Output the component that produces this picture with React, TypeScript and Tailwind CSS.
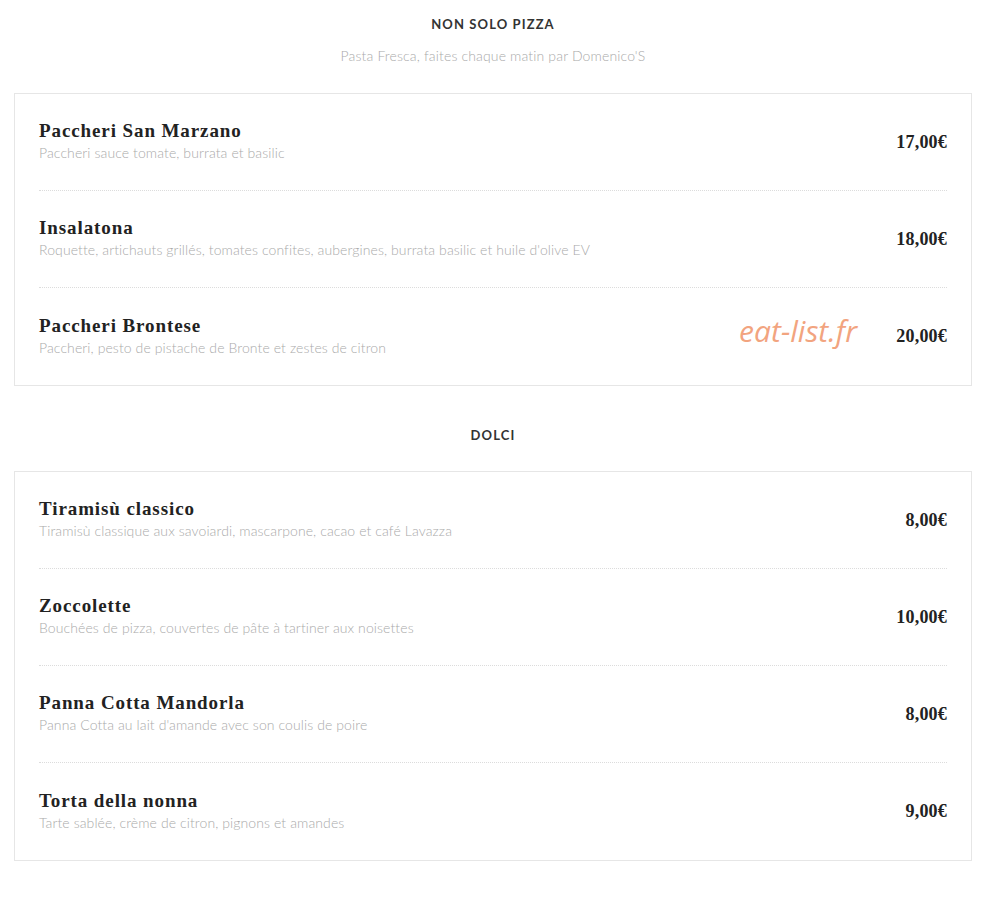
import React from "react";

type Dish = { name: string; desc: string; price: string };

const pasta: Dish[] = [
  { name: "Paccheri San Marzano", desc: "Paccheri sauce tomate, burrata et basilic", price: "17,00€" },
  {
    name: "Insalatona",
    desc: "Roquette, artichauts grillés, tomates confites, aubergines, burrata basilic et huile d'olive EV",
    price: "18,00€",
  },
  { name: "Paccheri Brontese", desc: "Paccheri, pesto de pistache de Bronte et zestes de citron", price: "20,00€" },
];

const dolci: Dish[] = [
  { name: "Tiramisù classico", desc: "Tiramisù classique aux savoiardi, mascarpone, cacao et café Lavazza", price: "8,00€" },
  { name: "Zoccolette", desc: "Bouchées de pizza, couvertes de pâte à tartiner aux noisettes", price: "10,00€" },
  { name: "Panna Cotta Mandorla", desc: "Panna Cotta au lait d'amande avec son coulis de poire", price: "8,00€" },
  { name: "Torta della nonna", desc: "Tarte sablée, crème de citron, pignons et amandes", price: "9,00€" },
];

const MenuCard = ({ dishes, watermarkAt }: { dishes: Dish[]; watermarkAt?: number }) => (
  <div className="border border-[#e6e6e6] bg-white px-6">
    {dishes.map((d, i) => (
      <div
        key={d.name}
        className={`relative flex h-[97px] items-center justify-between ${
          i < dishes.length - 1 ? "border-b border-dotted border-[#dcdcdc]" : ""
        }`}
      >
        <div className="flex flex-col pb-[2px]">
          <h3 className="font-['Liberation_Serif',serif] text-[19px] font-bold leading-[24px] tracking-[0.9px] text-[#222]">
            {d.name}
          </h3>
          <p className="font-['Lato',sans-serif] text-[14px] font-light leading-[20px] tracking-[0.1px] text-[#aaaaaa]">
            {d.desc}
          </p>
        </div>
        <span className="font-['Liberation_Serif',serif] text-[18px] font-bold tracking-[0.2px] text-[#222]">
          {d.price}
        </span>
        {watermarkAt === i && (
          <span className="absolute right-[90px] top-[20px] font-['Open_Sans',sans-serif] text-[30px] italic text-[#f2a47f]">
            eat-list.fr
          </span>
        )}
      </div>
    ))}
  </div>
);

export default function App() {
  return (
    <div className="min-h-[908px] bg-white px-[14px] pt-[16px] font-['Lato',sans-serif]">
      <div className="w-[958px]">
        <h2 className="text-center text-[13px] font-bold leading-[16px] tracking-[1.1px] text-[#333]">NON SOLO PIZZA</h2>
        <p className="mt-[16px] text-center text-[14px] font-light leading-[16px] tracking-[0.15px] text-[#aaaaaa]">
          Pasta Fresca, faites chaque matin par Domenico'S
        </p>
        <div className="mt-[29px]">
          <MenuCard dishes={pasta} watermarkAt={2} />
        </div>
        <h2 className="mt-[41px] text-center text-[13px] font-bold leading-[16px] tracking-[1.1px] text-[#333]">DOLCI</h2>
        <div className="mt-[28px]">
          <MenuCard dishes={dolci} />
        </div>
      </div>
    </div>
  );
}
